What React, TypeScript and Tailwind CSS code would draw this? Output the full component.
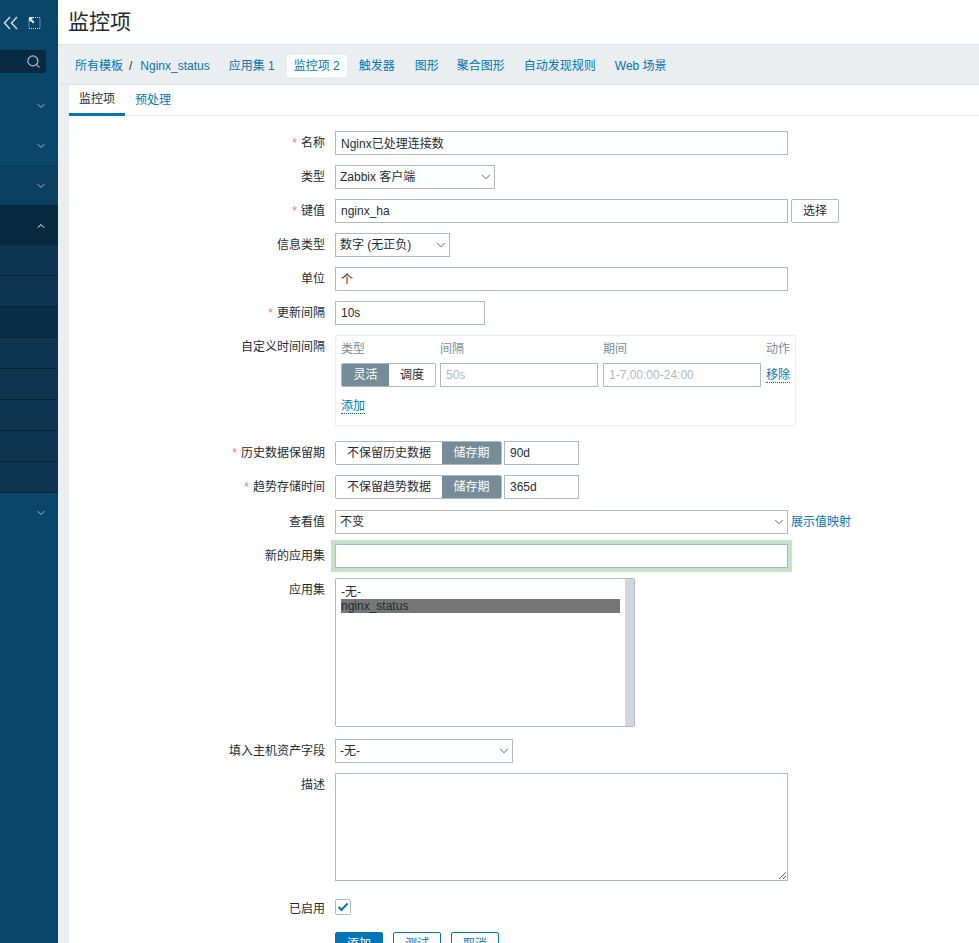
import { ReactNode } from "react";
import { ChevronDown, ChevronUp, Search } from "lucide-react";

const TABS = [
  { label: "应用集 1", cls: "ml-[19px]" },
  { label: "监控项 2", cls: "ml-[13px] bg-white", active: true },
  { label: "触发器", cls: "ml-[12px]" },
  { label: "图形", cls: "ml-[20px]" },
  { label: "聚合图形", cls: "ml-[18px]" },
  { label: "自动发现规则", cls: "ml-[19px]" },
  { label: "Web 场景", cls: "ml-[19px]" },
];

const inputCls =
  "h-6 border border-[#acbbc2] bg-white px-[5px] pb-[1px] text-xs text-[#1f2c33] outline-none placeholder:text-[#acbbc2]";

function Row({ label, req, children, className }: { label?: string; req?: boolean; children: ReactNode; className?: string }) {
  return (
    <div className={"flex " + (className ?? "mb-[10px]")}>
      <div className="w-[256px] shrink-0 pt-[5px] text-right text-xs leading-[14px] text-[#1f2c33]">
        {req && <span className="mr-[4px] text-[#e8788a]">*</span>}
        {label}
      </div>
      <div className="ml-[10px] flex min-w-0 flex-1 items-start">{children}</div>
    </div>
  );
}

function FakeSelect({ value, w }: { value: string; w: string }) {
  return (
    <div className={"flex h-6 items-center justify-between border border-[#acbbc2] bg-white pl-[4px] pr-[1px] text-xs text-[#1f2c33] " + w}>
      <span>{value}</span>
      <ChevronDown className="h-[14px] w-[14px] text-[#4f4f4f]" strokeWidth={1.5} />
    </div>
  );
}

function Segment({ off, on }: { off: string; on: string }) {
  return (
    <div className="flex h-6 overflow-hidden rounded-[2px] border border-[#acbbc2] text-xs">
      <div className="flex w-[106px] items-center justify-center bg-white text-[#1f2c33]">{off}</div>
      <div className="flex w-[59px] items-center justify-center bg-[#768d99] text-white">{on}</div>
    </div>
  );
}

function Sidebar() {
  const subRows = ["bg-[#0d3550]", "bg-[#0d3550]", "bg-[#0a2e45]", "bg-[#0d3550]", "bg-[#0d3550]", "bg-[#0d3550]", "bg-[#0d3550]", "bg-[#0d3550]"];
  return (
    <aside className="flex h-full w-[58px] shrink-0 flex-col bg-[#0a466a]">
      <div className="flex h-[50px] items-start pl-[3px] pt-[16px]">
        <svg width="15" height="14" viewBox="0 0 15 14" fill="none">
          <path d="M7 1L1.5 7 7 13M14 1L8.5 7 14 13" stroke="#c5d3dc" strokeWidth="1.6" />
        </svg>
        <svg className="ml-[10px]" width="13" height="14" viewBox="0 0 13 14" fill="none">
          <rect x="1" y="1.5" width="11" height="11" stroke="#c5d3dc" strokeDasharray="1 1" />
          <path d="M1 1h5L3.8 3.2 6.6 6 5 7.6 2.2 4.8 1 6z" fill="#dfe7ec" />
        </svg>
      </div>
      <div className="flex h-[23px] w-[46px] items-center justify-end rounded-r-[3px] border border-l-0 border-[#08283c] bg-[#062b42] pr-[4px]">
        <Search className="h-[15px] w-[15px] text-[#a9bcc8]" strokeWidth={2} />
      </div>
      <div className="mt-[12px] flex h-10 items-center justify-end pr-[11px] pt-[2px]">
        <ChevronDown className="h-3 w-3 text-[#a9bcc8]" />
      </div>
      <div className="flex h-10 items-center justify-end pr-[11px] pt-[2px]">
        <ChevronDown className="h-3 w-3 text-[#a9bcc8]" />
      </div>
      <div className="flex h-10 items-center justify-end bg-[#0a4162] pr-[11px] pt-[2px]">
        <ChevronDown className="h-3 w-3 text-[#a9bcc8]" />
      </div>
      <div className="flex h-10 items-center justify-end bg-[#082840] pr-[11px] pt-[2px]">
        <ChevronUp className="h-3 w-3 text-white" />
      </div>
      {subRows.map((c, i) => (
        <div key={i} className={"h-[31px] border-b border-[#0a2235] last:border-b-0 " + c} />
      ))}
      <div className="flex h-10 items-center justify-end pr-[11px]">
        <ChevronDown className="h-3 w-3 text-[#a9bcc8]" />
      </div>
    </aside>
  );
}

export default function App() {
  return (
    <div className="flex h-[943px] w-[979px] overflow-hidden bg-white font-['Liberation_Sans','Noto_Sans_CJK_SC',sans-serif]">
      <Sidebar />
      <main className="flex min-w-0 flex-1 flex-col">
        <header className="h-[44px] shrink-0 pl-[10px] pt-[8px] text-[21px] leading-[28px] text-[#1f2c33]">监控项</header>
        <nav className="flex h-[41px] shrink-0 items-center border-y border-[#dfe4e7] bg-[#ebeef0] pl-[17px] pt-[3px] text-xs text-[#0275b8]">
          <span>所有模板</span>
          <span className="mx-[6px] text-[#1f2c33]">/</span>
          <span className="ml-[2px]">Nginx_status</span>
          {TABS.map((t) => (
            <span key={t.label} className={t.active ? "ml-[12px] rounded-[2px] bg-white px-[7px] py-[3px] text-[#0275b8]" : t.cls}>
              {t.label}
            </span>
          ))}
        </nav>
        <div className="flex min-h-0 flex-1 bg-[#ebeef0] pl-[11px]">
          <div className="flex-1 bg-white">
            <div className="flex h-[31px] border-b border-[#ebeef0] text-xs">
              <div className="flex h-[31px] w-[56px] items-center justify-center border-b-[3px] border-[#0275b8] text-[#1f2c33]">监控项</div>
              <div className="flex h-[30px] items-center pl-[10px] text-[#0275b8]">预处理</div>
            </div>
            <form className="pt-[15px]">
              <Row label="名称" req>
                <input className={inputCls + " w-[453px]"} defaultValue="Nginx已处理连接数" />
              </Row>
              <Row label="类型">
                <FakeSelect value="Zabbix 客户端" w="w-[160px]" />
              </Row>
              <Row label="键值" req>
                <input className={inputCls + " w-[453px]"} defaultValue="nginx_ha" />
                <button type="button" className="ml-[3px] h-6 w-[48px] rounded-[2px] border border-[#acbbc2] bg-white text-xs text-[#1f2c33]">选择</button>
              </Row>
              <Row label="信息类型">
                <FakeSelect value="数字 (无正负)" w="w-[115px]" />
              </Row>
              <Row label="单位">
                <input className={inputCls + " w-[453px]"} defaultValue="个" />
              </Row>
              <Row label="更新间隔" req>
                <input className={inputCls + " w-[150px]"} defaultValue="10s" />
              </Row>
              <Row label="自定义时间间隔" className="mb-[15px]">
                <div className="h-[91px] w-[461px] border border-[#ebeef0] pl-[5px] pt-[5px] text-xs">
                  <div className="flex h-[22px] text-[#768d99]">
                    <span className="w-[99px]">类型</span>
                    <span className="w-[163px]">间隔</span>
                    <span className="w-[163px]">期间</span>
                    <span>动作</span>
                  </div>
                  <div className="flex items-center">
                    <div className="flex h-6 w-[95px] overflow-hidden rounded-[2px] border border-[#acbbc2]">
                      <div className="flex w-[47px] items-center justify-center bg-[#768d99] text-white">灵活</div>
                      <div className="flex flex-1 items-center justify-center bg-white text-[#1f2c33]">调度</div>
                    </div>
                    <input className={inputCls + " ml-[4px] w-[158px]"} placeholder="50s" />
                    <input className={inputCls + " ml-[5px] w-[158px]"} placeholder="1-7,00:00-24:00" />
                    <span className="ml-[5px] border-b border-dotted border-[#0275b8] leading-[14px] text-[#0275b8]">移除</span>
                  </div>
                  <span className="mt-[12px] inline-block border-b border-dotted border-[#0275b8] leading-[14px] text-[#0275b8]">添加</span>
                </div>
              </Row>
              <Row label="历史数据保留期" req>
                <Segment off="不保留历史数据" on="储存期" />
                <input className={inputCls + " ml-[2px] w-[75px]"} defaultValue="90d" />
              </Row>
              <Row label="趋势存储时间" req className="mb-[11px]">
                <Segment off="不保留趋势数据" on="储存期" />
                <input className={inputCls + " ml-[2px] w-[75px]"} defaultValue="365d" />
              </Row>
              <Row label="查看值">
                <FakeSelect value="不变" w="w-[453px]" />
                <span className="ml-[3px] pt-[5px] text-xs leading-[14px] text-[#0275b8]">展示值映射</span>
              </Row>
              <Row label="新的应用集">
                <input className={inputCls + " w-[453px] shadow-[0_0_0_4px_#c5e3c7]"} />
              </Row>
              <Row label="应用集" className="mb-[12px]">
                <div className="flex h-[149px] w-[300px] rounded-[2px] border border-[#acbbc2] bg-white text-xs text-[#1f2c33]">
                  <div className="min-w-0 flex-1 pl-[5px] pr-[5px] pt-[6px] leading-[14px]">
                    <div>-无-</div>
                    <div className="bg-[#767676]">nginx_status</div>
                  </div>
                  <div className="w-[9px] bg-[#cfd8de]" />
                </div>
              </Row>
              <Row label="填入主机资产字段">
                <FakeSelect value="-无-" w="w-[178px]" />
              </Row>
              <Row label="描述" className="mb-[16px]">
                <textarea className="h-[108px] w-[453px] border border-[#acbbc2] bg-white outline-none" />
              </Row>
              <Row label="已启用" className="mb-[16px]">
                <div className="mt-[2px] flex h-4 w-4 items-center justify-center rounded-[2px] border border-[#acbbc2] bg-white">
                  <svg width="12" height="10" viewBox="0 0 12 10" fill="none">
                    <path d="M1.5 5l3 3 6-6.5" stroke="#0275b8" strokeWidth="2" />
                  </svg>
                </div>
              </Row>
              <div className="ml-[266px] flex gap-[10px] text-xs">
                <button type="button" className="h-6 w-[48px] rounded-[2px] border border-[#0275b8] bg-[#0275b8] text-white">添加</button>
                <button type="button" className="h-6 w-[48px] rounded-[2px] border border-[#0275b8] bg-white text-[#0275b8]">测试</button>
                <button type="button" className="h-6 w-[48px] rounded-[2px] border border-[#0275b8] bg-white text-[#0275b8]">取消</button>
              </div>
            </form>
          </div>
        </div>
      </main>
    </div>
  );
}
